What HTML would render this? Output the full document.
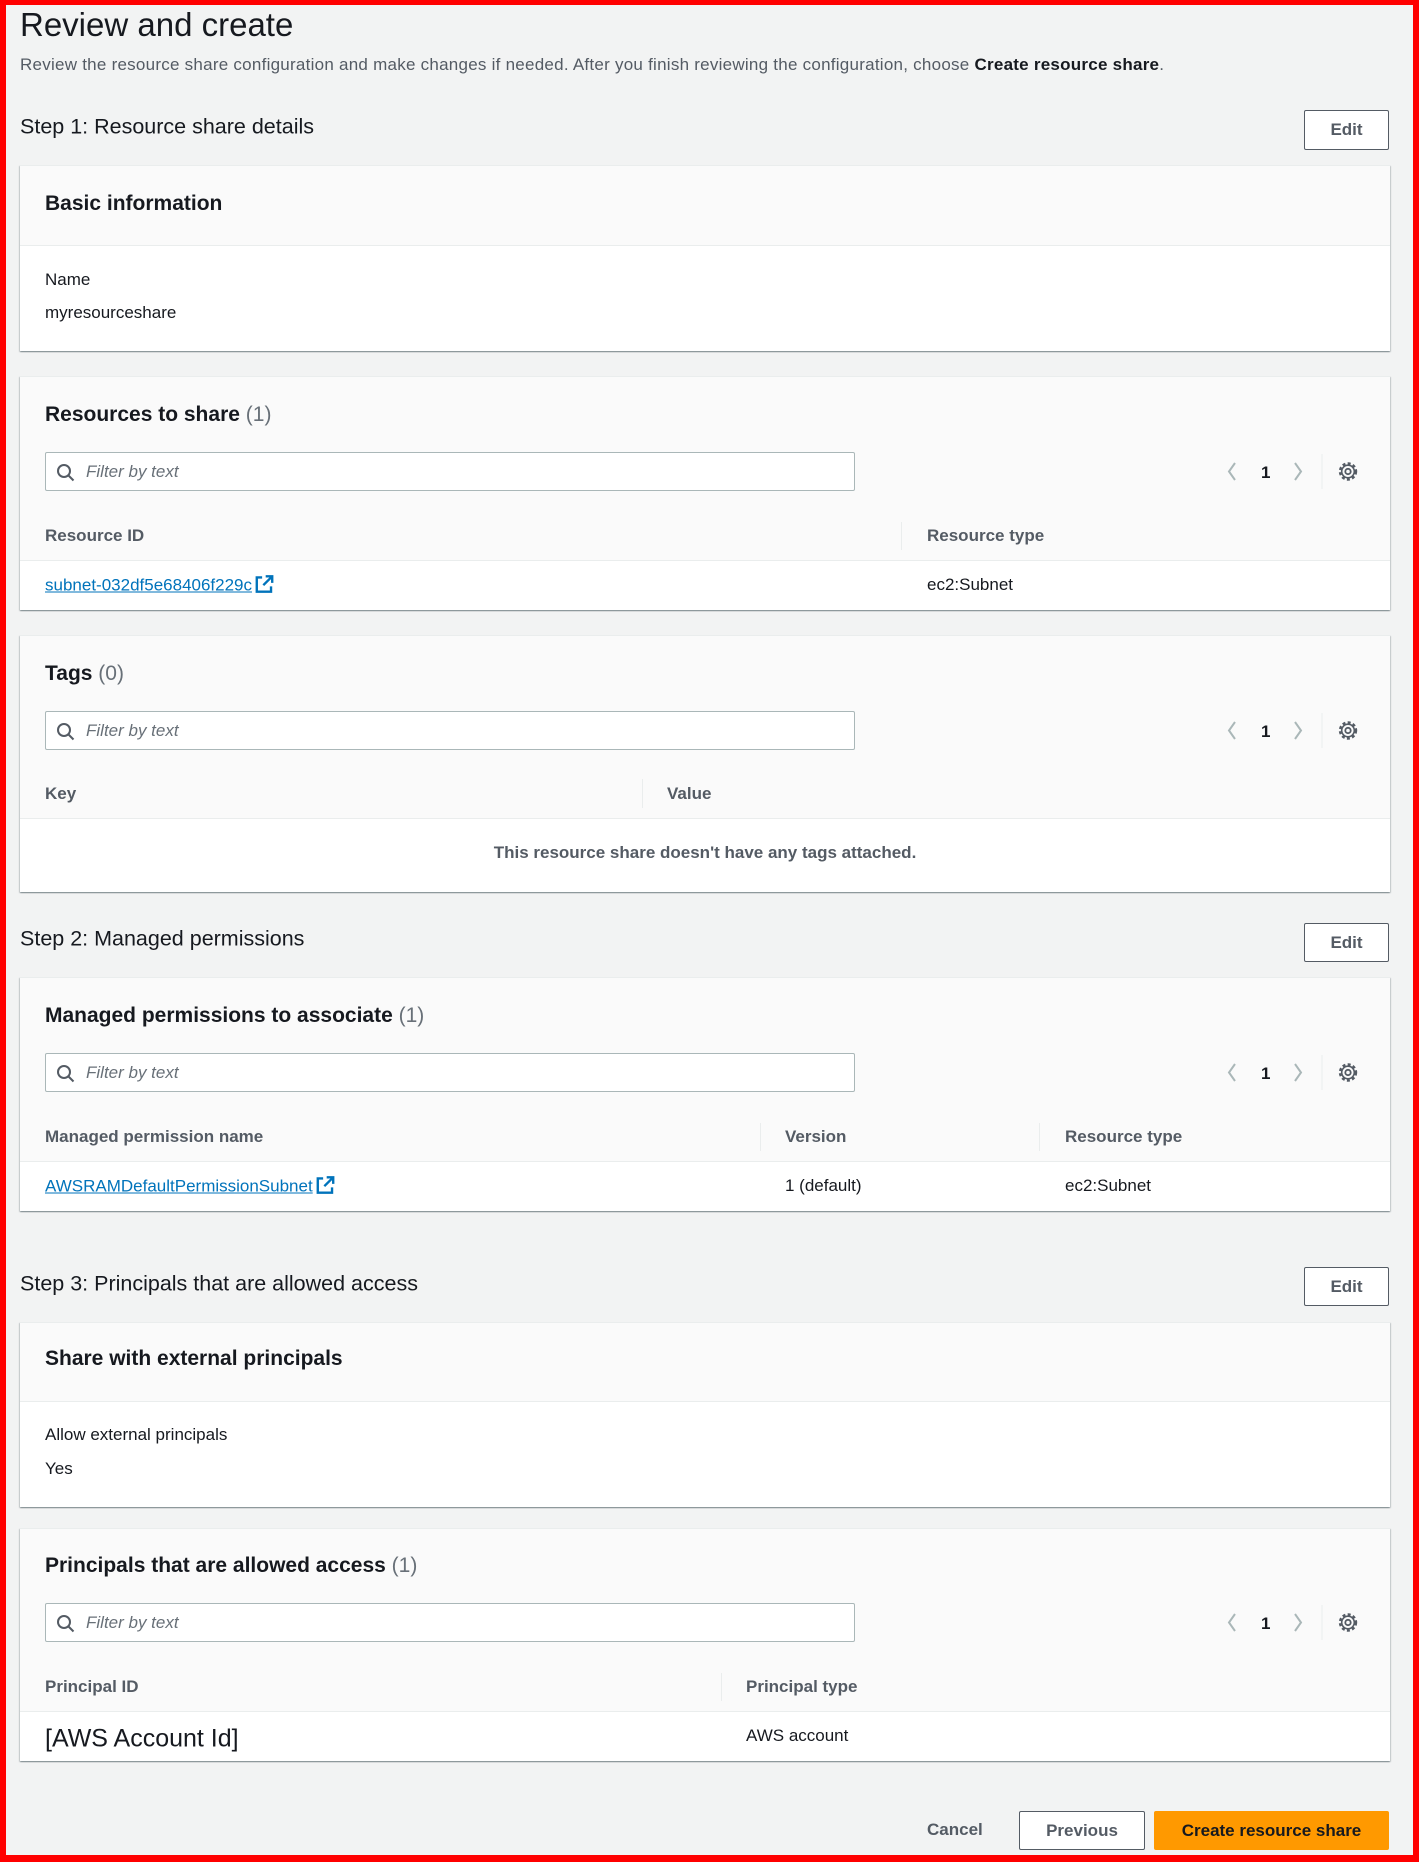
<!DOCTYPE html>
<html><head><meta charset="utf-8"><style>
*{box-sizing:border-box;margin:0;padding:0}
body{width:1419px;height:1862px;background:#f2f3f3;font-family:"Liberation Sans",sans-serif;color:#16191f;position:relative;overflow:hidden}
.frame{position:absolute;left:0;top:0;width:1419px;height:1862px;border:6px solid #f00;border-top-width:5px;border-bottom-width:7px;pointer-events:none;z-index:10}
.a{position:absolute;white-space:nowrap}
.card{position:absolute;left:20px;width:1370px;background:#fff;box-shadow:0 1px 1px rgba(0,28,36,.3),1px 1px 1px rgba(0,28,36,.15),-1px 1px 1px rgba(0,28,36,.15);border-top:1px solid #eaeded}
.hd{position:absolute;left:0;right:0;top:0;background:#fafafa;border-bottom:1px solid #eaeded}
.h2{position:absolute;left:25px;font-size:21px;font-weight:bold;transform:translateY(-50%)}
.h2 span{font-weight:normal;color:#687078}
.step{position:absolute;left:20px;font-size:21.5px;transform:translateY(-50%)}
.btn{position:absolute;border:1px solid #545b64;background:#fff;border-radius:2px;font-weight:bold;font-size:17px;color:#545b64;display:flex;align-items:center;justify-content:center}
.filter{position:absolute;left:25px;width:810px;height:39px;border:1px solid #aab7b8;background:#fff;border-radius:2px}
.filter svg{position:absolute;left:10px;top:10px}
.filter i{position:absolute;left:40px;top:9px;font-size:17px;color:#687078}
.pg{position:absolute;right:0;width:180px;height:39px}
.th{position:absolute;left:0;right:0;background:#fafafa;border-bottom:1px solid #eaeded;height:49px}
.th div{position:absolute;top:50%;transform:translateY(-50%);font-weight:bold;font-size:17px;color:#545b64}
.th b{position:absolute;top:10px;bottom:10px;width:1px;background:#eaeded}
.td{position:absolute;font-size:17px;transform:translateY(-50%)}
.lk{color:#0073bb;text-decoration:underline}
.lk svg{vertical-align:-3px;margin-left:3px}
.t{font-size:17px;transform:translateY(-50%);position:absolute;left:25px}
</style></head><body>
<div class="frame"></div>
<div class="a" style="left:20px;top:6px;font-size:33px">Review and create</div>
<div class="a" style="left:20px;top:55px;font-size:17px;letter-spacing:0.25px;color:#545b64">Review the resource share configuration and make changes if needed. After you finish reviewing the configuration, choose <b style="color:#16191f">Create resource share</b>.</div>

<div class="step" style="top:127px">Step 1: Resource share details</div>
<div class="btn" style="left:1304px;top:110px;width:85px;height:40px">Edit</div>

<div class="card" style="top:165px;height:186px">
 <div class="hd" style="height:80px"></div>
 <div class="h2" style="top:38px">Basic information</div>
 <div class="t" style="top:114px">Name</div>
 <div class="t" style="top:147px">myresourceshare</div>
</div>

<div class="card" style="top:376px;height:234px">
 <div class="hd" style="height:135px;border:none"></div>
 <div class="h2" style="top:38px">Resources to share <span>(1)</span></div>
 <div class="filter" style="top:75px"><svg width="20" height="20" viewBox="0 0 20 20"><circle cx="8" cy="8" r="6" fill="none" stroke="#545b64" stroke-width="2"/><path d="M12.5 12.5l5 5" stroke="#545b64" stroke-width="2"/></svg><i>Filter by text</i></div>
 <div class="pg" style="top:75px"><svg width="180" height="39"><path d="M25 11l-6 8.5 6 8.5" fill="none" stroke="#aab7b8" stroke-width="2"/><text x="51" y="26" font-family="Liberation Sans" font-weight="bold" font-size="17" fill="#16191f">1</text><path d="M85 11l6 8.5-6 8.5" fill="none" stroke="#aab7b8" stroke-width="2"/><path d="M112 2v35" stroke="#eaeded"/><circle cx="138" cy="19.5" r="8" fill="none" stroke="#545b64" stroke-width="2.4" stroke-dasharray="3 2.3"/><circle cx="138" cy="19.5" r="6.3" fill="none" stroke="#545b64" stroke-width="1.6"/><circle cx="138" cy="19.5" r="2.7" fill="none" stroke="#545b64" stroke-width="1.8"/></svg></div>
 <div class="th" style="top:135px"><div style="left:25px">Resource ID</div><b style="left:881px"></b><div style="left:907px">Resource type</div></div>
 <div class="td lk" style="left:25px;top:208px">subnet-032df5e68406f229c<svg width="19" height="19" viewBox="0 0 16 16"><path d="M9 1.5h5.5V7M14.5 1.5L7 9M6 2.5H1.5v12h12V10" fill="none" stroke="#0073bb" stroke-width="2"/></svg></div>
 <div class="td" style="left:907px;top:208px">ec2:Subnet</div>
</div>

<div class="card" style="top:635px;height:257px">
 <div class="hd" style="height:133px;border:none"></div>
 <div class="h2" style="top:38px">Tags <span>(0)</span></div>
 <div class="filter" style="top:75px"><svg width="20" height="20" viewBox="0 0 20 20"><circle cx="8" cy="8" r="6" fill="none" stroke="#545b64" stroke-width="2"/><path d="M12.5 12.5l5 5" stroke="#545b64" stroke-width="2"/></svg><i>Filter by text</i></div>
 <div class="pg" style="top:75px"><svg width="180" height="39"><path d="M25 11l-6 8.5 6 8.5" fill="none" stroke="#aab7b8" stroke-width="2"/><text x="51" y="26" font-family="Liberation Sans" font-weight="bold" font-size="17" fill="#16191f">1</text><path d="M85 11l6 8.5-6 8.5" fill="none" stroke="#aab7b8" stroke-width="2"/><path d="M112 2v35" stroke="#eaeded"/><circle cx="138" cy="19.5" r="8" fill="none" stroke="#545b64" stroke-width="2.4" stroke-dasharray="3 2.3"/><circle cx="138" cy="19.5" r="6.3" fill="none" stroke="#545b64" stroke-width="1.6"/><circle cx="138" cy="19.5" r="2.7" fill="none" stroke="#545b64" stroke-width="1.8"/></svg></div>
 <div class="th" style="top:133px;height:50px"><div style="left:25px">Key</div><b style="left:622px"></b><div style="left:647px">Value</div></div>
 <div class="td" style="left:0;right:0;text-align:center;top:217px;font-weight:bold;color:#545b64">This resource share doesn't have any tags attached.</div>
</div>

<div class="step" style="top:939px">Step 2: Managed permissions</div>
<div class="btn" style="left:1304px;top:923px;width:85px;height:39px">Edit</div>

<div class="card" style="top:977px;height:234px">
 <div class="hd" style="height:135px;border:none"></div>
 <div class="h2" style="top:38px">Managed permissions to associate <span>(1)</span></div>
 <div class="filter" style="top:75px"><svg width="20" height="20" viewBox="0 0 20 20"><circle cx="8" cy="8" r="6" fill="none" stroke="#545b64" stroke-width="2"/><path d="M12.5 12.5l5 5" stroke="#545b64" stroke-width="2"/></svg><i>Filter by text</i></div>
 <div class="pg" style="top:75px"><svg width="180" height="39"><path d="M25 11l-6 8.5 6 8.5" fill="none" stroke="#aab7b8" stroke-width="2"/><text x="51" y="26" font-family="Liberation Sans" font-weight="bold" font-size="17" fill="#16191f">1</text><path d="M85 11l6 8.5-6 8.5" fill="none" stroke="#aab7b8" stroke-width="2"/><path d="M112 2v35" stroke="#eaeded"/><circle cx="138" cy="19.5" r="8" fill="none" stroke="#545b64" stroke-width="2.4" stroke-dasharray="3 2.3"/><circle cx="138" cy="19.5" r="6.3" fill="none" stroke="#545b64" stroke-width="1.6"/><circle cx="138" cy="19.5" r="2.7" fill="none" stroke="#545b64" stroke-width="1.8"/></svg></div>
 <div class="th" style="top:135px"><div style="left:25px">Managed permission name</div><b style="left:740px"></b><div style="left:765px">Version</div><b style="left:1019px"></b><div style="left:1045px">Resource type</div></div>
 <div class="td lk" style="left:25px;top:208px">AWSRAMDefaultPermissionSubnet<svg width="19" height="19" viewBox="0 0 16 16"><path d="M9 1.5h5.5V7M14.5 1.5L7 9M6 2.5H1.5v12h12V10" fill="none" stroke="#0073bb" stroke-width="2"/></svg></div>
 <div class="td" style="left:765px;top:208px">1 (default)</div>
 <div class="td" style="left:1045px;top:208px">ec2:Subnet</div>
</div>

<div class="step" style="top:1284px">Step 3: Principals that are allowed access</div>
<div class="btn" style="left:1304px;top:1267px;width:85px;height:39px">Edit</div>

<div class="card" style="top:1322px;height:185px">
 <div class="hd" style="height:79px"></div>
 <div class="h2" style="top:36px">Share with external principals</div>
 <div class="t" style="top:112px">Allow external principals</div>
 <div class="t" style="top:146px">Yes</div>
</div>

<div class="card" style="top:1528px;height:233px">
 <div class="hd" style="height:134px;border:none"></div>
 <div class="h2" style="top:37px">Principals that are allowed access <span>(1)</span></div>
 <div class="filter" style="top:74px"><svg width="20" height="20" viewBox="0 0 20 20"><circle cx="8" cy="8" r="6" fill="none" stroke="#545b64" stroke-width="2"/><path d="M12.5 12.5l5 5" stroke="#545b64" stroke-width="2"/></svg><i>Filter by text</i></div>
 <div class="pg" style="top:74px"><svg width="180" height="39"><path d="M25 11l-6 8.5 6 8.5" fill="none" stroke="#aab7b8" stroke-width="2"/><text x="51" y="26" font-family="Liberation Sans" font-weight="bold" font-size="17" fill="#16191f">1</text><path d="M85 11l6 8.5-6 8.5" fill="none" stroke="#aab7b8" stroke-width="2"/><path d="M112 2v35" stroke="#eaeded"/><circle cx="138" cy="19.5" r="8" fill="none" stroke="#545b64" stroke-width="2.4" stroke-dasharray="3 2.3"/><circle cx="138" cy="19.5" r="6.3" fill="none" stroke="#545b64" stroke-width="1.6"/><circle cx="138" cy="19.5" r="2.7" fill="none" stroke="#545b64" stroke-width="1.8"/></svg></div>
 <div class="th" style="top:134px"><div style="left:25px">Principal ID</div><b style="left:701px"></b><div style="left:726px">Principal type</div></div>
 <div class="td" style="left:25px;top:210px;font-size:25px">[AWS Account Id]</div>
 <div class="td" style="left:726px;top:207px">AWS account</div>
</div>

<div class="a" style="left:927px;top:1820px;font-size:17px;font-weight:bold;color:#545b64">Cancel</div>
<div class="btn" style="left:1019px;top:1811px;width:126px;height:39px">Previous</div>
<div class="btn" style="left:1154px;top:1811px;width:235px;height:39px;background:#ff9900;border-color:#ff9900;color:#16191f">Create resource share</div>
</body></html>
